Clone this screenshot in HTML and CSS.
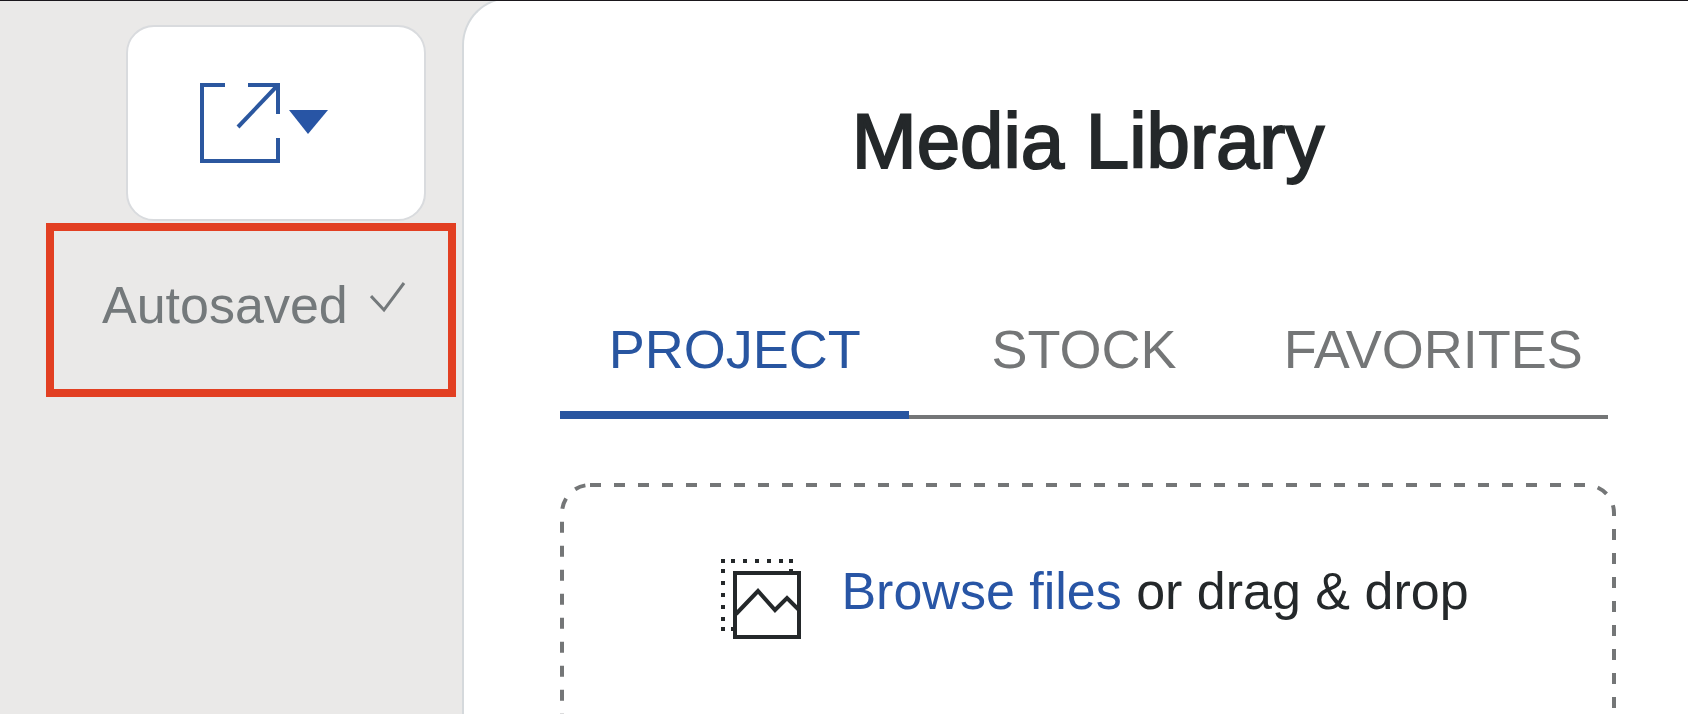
FILE: index.html
```
<!DOCTYPE html>
<html lang="en">
<head>
  <meta charset="UTF-8" />
  <title>Media Library</title>
  <link rel="stylesheet" href="styles.css">
</head>
<body>
  <div class="app">
    <aside class="sidebar">
      <button class="export" type="button" aria-label="Export">
        <svg width="128" height="82" viewBox="0 0 128 82" fill="none" stroke="#2b579f" stroke-width="4">
          <path d="M25 3H2V79H78V56" />
          <path d="M48 3H78V32" />
          <path d="M38 45L77 4" />
          <path d="M89 28H128L108 52Z" fill="#2855a5" stroke="none" />
        </svg>
      </button>
      <div class="autosave">
        <span>Autosaved</span>
        <svg class="check" width="36" height="32" viewBox="0 0 36 32" fill="none" stroke="#74797b" stroke-width="3">
          <path d="M1 15L14 29L34 2" />
        </svg>
      </div>
    </aside>

    <main class="panel">
      <h1>Media Library</h1>

      <nav class="tabs">
        <button class="tab active" type="button">PROJECT</button>
        <button class="tab" type="button">STOCK</button>
        <button class="tab" type="button">FAVORITES</button>
      </nav>

      <div class="dropzone">
        <svg class="outline">
          <rect class="dashes" x="2" y="2" rx="28" />
        </svg>
        <svg width="80" height="80" viewBox="0 0 80 80" fill="none" stroke="#24282a" stroke-width="4">
          <path d="M0 2H4M10 2H14M22 2H26M34 2H38M46 2H50M58 2H62M68 2H72" />
          <path d="M2 10V14M2 22V26M2 34V38M2 46V50M2 58V62M2 68V72M10 70H14M70 10V14" />
          <rect x="14" y="14" width="64" height="64" fill="#fff" />
          <path d="M15 55L37 32L54 51L66 39L78 51" />
        </svg>
        <p><a href="#">Browse files</a> or drag &amp; drop</p>
      </div>
    </main>
  </div>
</body>
</html>
```

FILE: styles.css
```
* {
  box-sizing: border-box;
}

body {
  margin: 0;
  border-top: 1px solid #1a171c;
  background: #eae9e8;
  color: #24282a;
  font-family: "Liberation Sans", Arial, sans-serif;
  font-size: 52px;
  line-height: 60px;
}

button {
  border: none;
  background: none;
  font: inherit;
  cursor: pointer;
}

.app {
  display: flex;
  height: calc(100vh - 1px);
  overflow: hidden;
}

.sidebar {
  flex: none;
  display: flex;
  flex-direction: column;
  padding: 24px 6px 0 46px;
}

.export {
  display: flex;
  align-items: center;
  align-self: flex-end;
  width: 300px;
  height: 196px;
  margin-right: 30px;
  padding: 0 72px;
  background: #fff;
  border: 2px solid #d9dbde;
  border-radius: 28px;
}

.autosave {
  display: flex;
  width: 410px;
  margin-top: 2px;
  padding: 44px 42px 54px 48px;
  border: 8px solid #e23f22;
  color: #74797b;
}

.check {
  margin: 6px 0 0 auto;
}

.panel {
  flex: 1;
  margin-top: -4px;
  padding: 94px 72px 0 96px;
  background: #fff;
  border: 2px solid #d5d9dc;
  border-width: 2px 0 0 2px;
  border-top-left-radius: 48px;
}

h1 {
  margin: 0;
  font-size: 78px;
  font-weight: normal;
  line-height: 96px;
  text-align: center;
  -webkit-text-stroke: 2px #24282a;
}

.tabs {
  display: grid;
  grid-template-columns: repeat(3, 1fr);
  margin: 130px 8px 0 0;
  box-shadow: inset 0 -4px #747677;
}

.tab {
  padding: 0 0 32px;
  border-bottom: 8px solid transparent;
  color: #747677;
  font-size: 54px;
}

.tab.active {
  border-color: #2855a0;
  color: #2855a0;
}

.dropzone {
  position: relative;
  display: flex;
  justify-content: center;
  align-items: flex-start;
  gap: 40px;
  height: 400px;
  margin-top: 64px;
  padding: 76px 0 0 14px;
}

.outline {
  position: absolute;
  inset: 0;
  width: 100%;
  height: 100%;
}

.dashes {
  width: calc(100% - 4px);
  height: calc(100% - 4px);
  fill: none;
  stroke: #747677;
  stroke-width: 4px;
  stroke-dasharray: 11 13;
}

.dropzone p {
  margin: 2px 0 0;
}

.dropzone a {
  position: relative;
  color: #2855a5;
  text-decoration: none;
}
```
